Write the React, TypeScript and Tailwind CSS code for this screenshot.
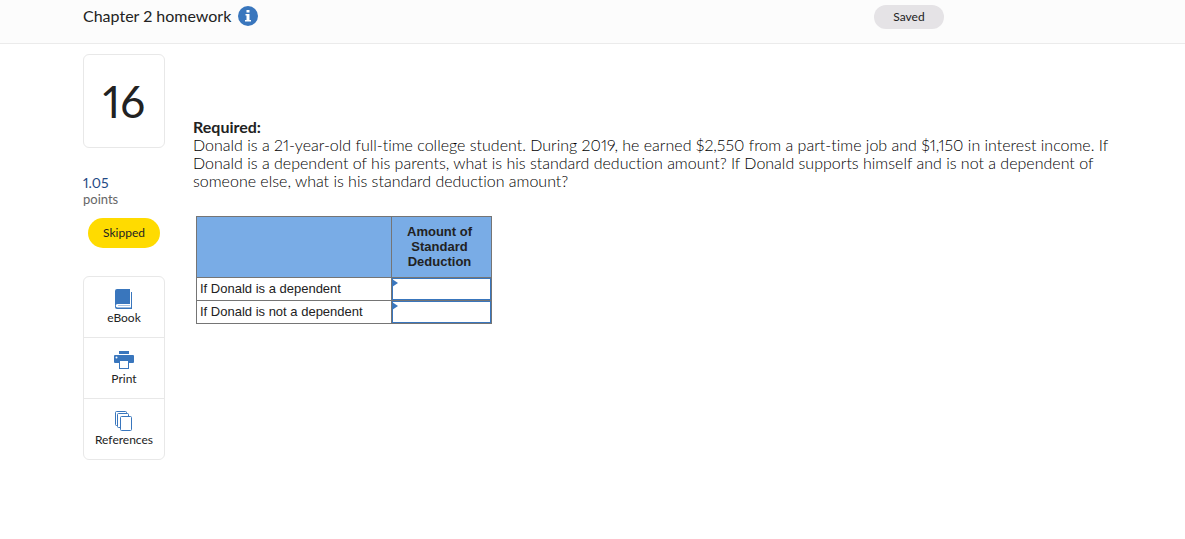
import type { ReactNode } from 'react';

const ROWS = [
  { id: 'dependent', label: 'If Donald is a dependent' },
  { id: 'not-dependent', label: 'If Donald is not a dependent' },
];

function BookIcon() {
  return (
    <svg width="20" height="20" viewBox="0 0 20 20" aria-hidden>
      <path d="M3 0h13v15H3.5a1.5 1.5 0 0 0 0 3.500H17V3h1v17H3a2 2 0 0 1-2-2V2a2 2 0 0 1 2-2z" fill="#3976bd" />
      <path d="M4 16h12v1H4z" fill="#a9c5e6" />
    </svg>
  );
}

function PrintIcon() {
  return (
    <svg width="20" height="18" viewBox="0 0 20 18" aria-hidden>
      <path
        d="M5 0h10v3H5zM1 4h18a1 1 0 0 1 1 1v6a1 1 0 0 1-1 1h-4v6H5v-6H1a1 1 0 0 1-1-1V5a1 1 0 0 1 1-1z"
        fill="#3976bd"
      />
      <path d="M6 10h8v7H6z" fill="#fff" />
      <circle cx="2.5" cy="6.5" r="1" fill="#fff" />
    </svg>
  );
}

function ReferencesIcon() {
  return (
    <svg width="20" height="20" viewBox="0 0 20 20" fill="#fff" stroke="#3976bd" aria-hidden>
      <rect x="1.5" y=".5" width="11" height="14" rx="1" />
      <rect x="3.5" y="2.5" width="11" height="14" rx="1" />
      <rect x="6.5" y="5.5" width="11" height="14" rx="1" />
    </svg>
  );
}

function ToolButton({ icon, children }: { icon: ReactNode; children: ReactNode }) {
  return (
    <button
      type="button"
      className="flex h-[61px] w-full flex-col items-center gap-px border-b border-[#e8e8e8] pt-3 text-xs leading-4 last:h-[60px] last:border-b-0"
    >
      <span className="flex h-5 items-center">{icon}</span>
      {children}
    </button>
  );
}

export default function App() {
  return (
    <div className="bg-white font-['Lato',sans-serif] text-[#222] proportional-nums [font-variant-ligatures:none]">
      <header className="flex h-11 items-start border-b border-[#ebebeb] bg-[#fcfcfc] pl-[83px]">
        <div className="flex flex-1 items-center gap-[7px] pt-1.5">
          <h1 className="text-base leading-5">Chapter 2 homework</h1>
          <button type="button" aria-label="Assignment information">
            <svg width="20" height="20" viewBox="0 0 20 20" aria-hidden>
              <circle cx="10" cy="10" r="10" fill="#3976bd" />
              <path d="M8.5 4h3v2.5h-3zM7.5 8h4v6H13v1.5H7V14h1.5V9.500h-1z" fill="#fff" />
            </svg>
          </button>
        </div>
        <span className="mt-[5px] mr-[241px] flex h-6 w-[70px] items-center justify-center rounded-full bg-[#e5e3e6] text-xs">
          Saved
        </span>
      </header>

      <div className="flex items-start gap-7 pt-2.5 pr-12 pl-[83px]">
        <aside className="w-[82px] shrink-0">
          <div className="flex h-[94px] items-center justify-center rounded-md border border-[#e8e8e8] text-[44px]">
            16
          </div>
          <p className="mt-[27px] text-sm leading-4 text-[#1f4a85]">1.05</p>
          <p className="text-[13px] leading-4 text-[#666]">points</p>
          <div className="mx-auto mt-[11px] flex h-[30px] w-[72px] items-center justify-center rounded-full bg-[#ffdb00] text-xs">
            Skipped
          </div>
          <div className="mt-7 overflow-hidden rounded-md border border-[#e8e8e8]">
            <ToolButton icon={<BookIcon />}>eBook</ToolButton>
            <ToolButton icon={<PrintIcon />}>Print</ToolButton>
            <ToolButton icon={<ReferencesIcon />}>References</ToolButton>
          </div>
        </aside>

        <main className="flex-1 pt-16">
          <h2 className="text-base leading-[18px] font-bold">Required:</h2>
          <p className="text-base leading-[18px] font-light text-black">
            Donald is a 21-year-old full-time college student. During 2019, he earned $2,550 from a part-time job and
            $1,150 in interest income. If Donald is a dependent of his parents, what is his standard deduction amount?
            If Donald supports himself and is not a dependent of someone else, what is his standard deduction amount?
          </p>

          <table className="mt-[26px] ml-[3px] w-[296px] table-fixed border-collapse font-['Liberation_Sans',sans-serif] text-[13px] leading-[15px]">
            <thead>
              <tr className="h-[61px] bg-[#79ace6]">
                <td className="w-[195px] border border-[#757575]" />
                <th scope="col" className="border border-[#757575] pr-4 pb-0.5 pl-3 font-bold">
                  Amount of Standard Deduction
                </th>
              </tr>
            </thead>
            <tbody>
              {ROWS.map((row) => (
                <tr key={row.id} className="h-[23px]">
                  <th scope="row" className="border border-[#757575] px-[3px] pb-0.5 text-left font-normal">
                    <label htmlFor={row.id}>{row.label}</label>
                  </th>
                  <td className="relative border border-[#757575] p-0">
                    <input
                      id={row.id}
                      type="text"
                      className="block h-[22px] w-full border border-[#3976bd] px-2 text-right outline-none"
                    />
                    {/* Answer marker in the cell corner */}
                    <svg className="absolute top-0 left-0" width="6" height="9" viewBox="0 0 6 9" aria-hidden>
                      <path d="M0 1l6 4-6 4z" fill="#3976bd" />
                    </svg>
                  </td>
                </tr>
              ))}
            </tbody>
          </table>
        </main>
      </div>
    </div>
  );
}
